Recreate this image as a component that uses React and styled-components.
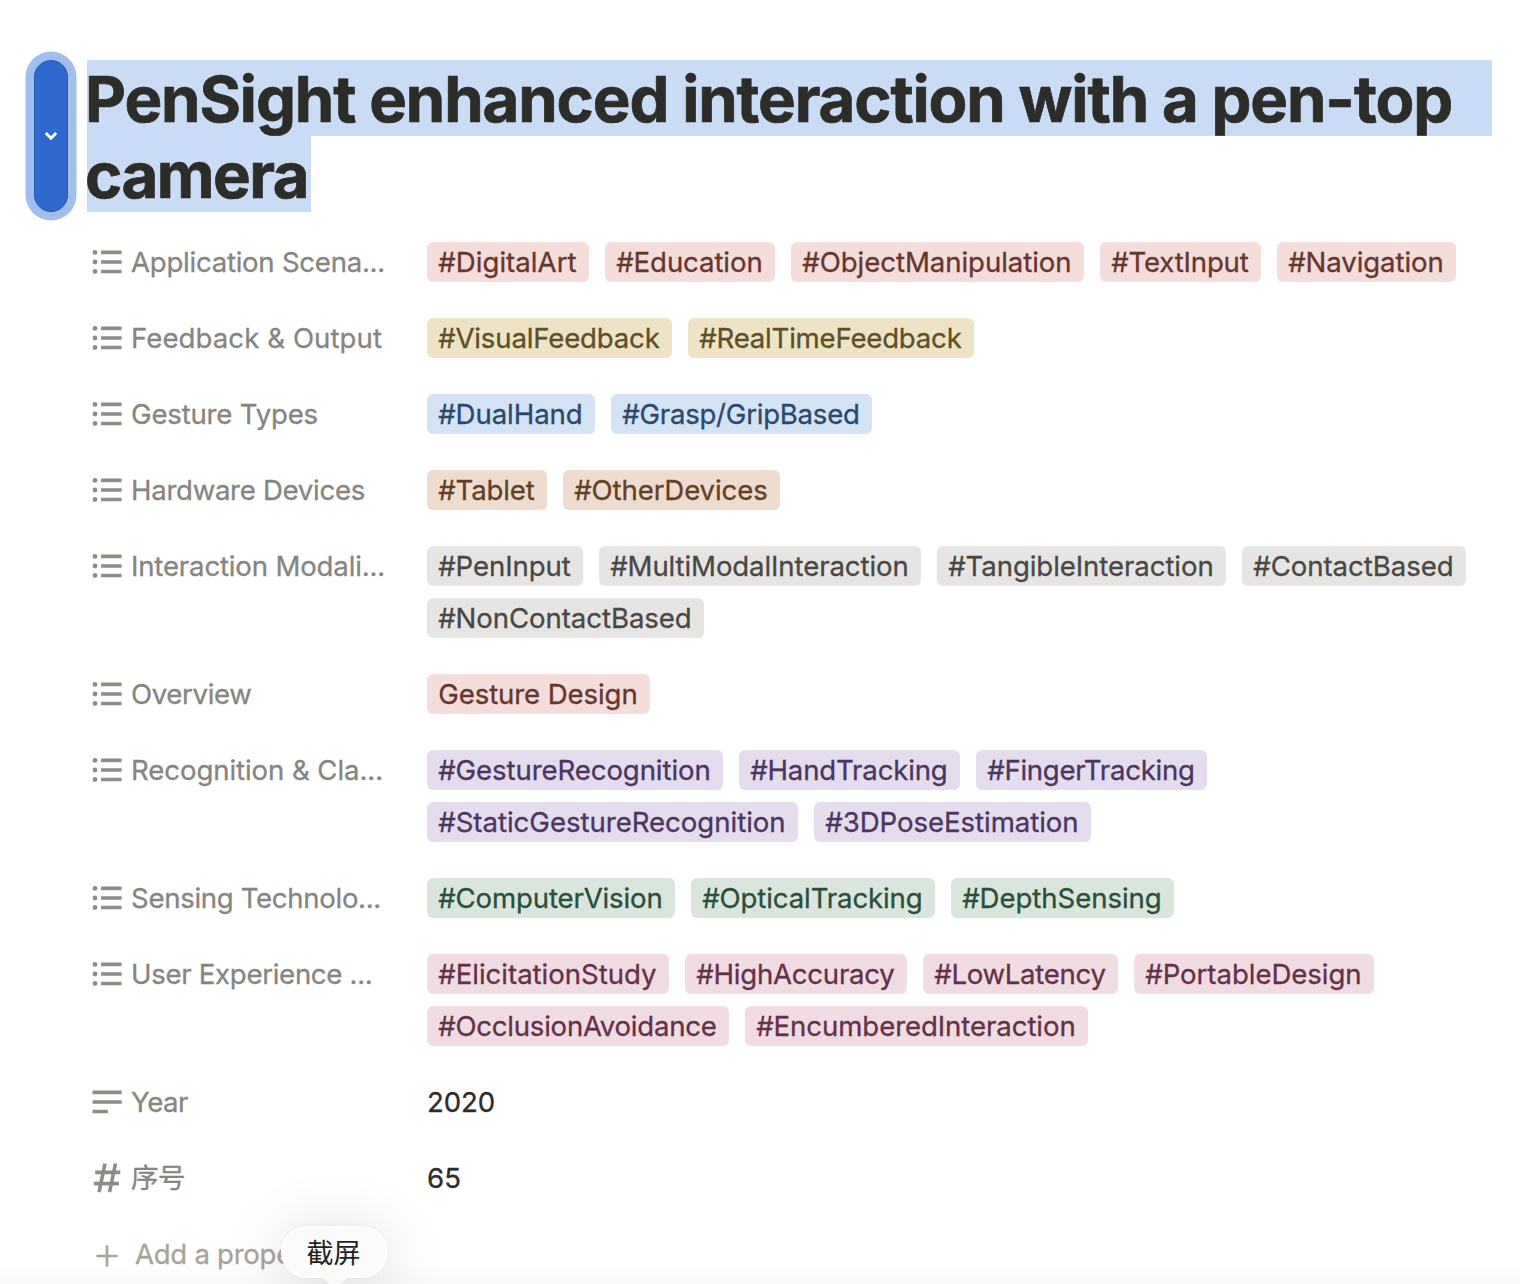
import React, { useLayoutEffect, useRef, useState } from "react";
import styled, { createGlobalStyle } from "styled-components";

const GlobalStyle = createGlobalStyle`
  * { box-sizing: border-box; }
  body {
    margin: 0;
    background: #fff;
    font-family: Inter, "Noto Sans CJK SC", sans-serif;
    font-size: 27.6px;
    font-weight: 400;
    line-height: 40px;
    color: #2c2c2b;
    overflow: hidden;
    -webkit-text-stroke: 0.3px currentColor;
  }
`;

const Page = styled.main`
  position: relative;
  width: 1520px;
  height: 1284px;
  padding: 60px 28px 0 34px;
  overflow: hidden;
  background: linear-gradient(#fff 1258px, #fafafa 1284px);
`;

const Header = styled.header`
  display: flex;
  gap: 19px;
  height: 152px;
`;

const Handle = styled.button`
  display: flex;
  align-items: center;
  justify-content: center;
  width: 34px;
  height: 152px;
  padding: 0;
  border: 1px solid #2756ab;
  border-radius: 17px;
  background: #3069cd;
  box-shadow: 0 0 0 8.5px #a1bfee;
`;

const Title = styled.h1`
  flex: 1;
  margin: 0;
  font-size: 63.4px;
  line-height: 78px;
  font-weight: 700;
  -webkit-text-stroke: 0.7px currentColor;
`;

const TitleLine = styled.span`
  display: block;
  width: ${(p) => p.$width}px;
  height: 76px;
  background: #cadbf5;
  text-indent: -1px;
`;

const List = styled.section`
  display: flex;
  flex-direction: column;
  gap: 36px;
  padding: 30px 0 0 58px;
`;

const Row = styled.div`
  display: flex;
`;

const Label = styled.div`
  display: flex;
  gap: 9px;
  width: 335px;
  height: 40px;
  color: #868580;
  svg { flex: none; width: 30px; height: 40px; }
`;

const Values = styled.div`
  display: flex;
  flex: 1;
  flex-wrap: wrap;
  gap: 12px 16px;
`;

const PlainValue = styled.div`
  height: 40px;
`;

const TONES = {
  red: ["#f4dddb", "#68352e"],
  yellow: ["#eee3c5", "#5f4f27"],
  blue: ["#d5e3f6", "#2b486d"],
  orange: ["#f0dccf", "#633f26"],
  gray: ["#e6e5e3", "#494846"],
  purple: ["#e5dcee", "#4b3563"],
  green: ["#dae6dd", "#2a4f3a"],
  pink: ["#f2dce3", "#653148"],
};

const Tag = styled.span`
  height: 40px;
  padding: 0 12px;
  border-radius: 6px;
  text-indent: -0.4px;
  background: ${(p) => TONES[p.$tone][0]};
  color: ${(p) => TONES[p.$tone][1]};
`;

const Text = styled.span`
  display: block;
  white-space: nowrap;
  width: ${(p) => p.$width}px;
`;

const Measure = styled.span`
  display: inline-block;
`;

const AddRow = styled.div`
  display: flex;
  gap: 13px;
  height: 40px;
  color: #a7a49c;
  svg { flex: none; width: 30px; height: 40px; }
`;

const Bubble = styled.div`
  position: absolute;
  left: 281px;
  top: 1226px;
  width: 107px;
  height: 52px;
  border: 2px solid #fff;
  border-radius: 26px;
  background: #fbfbfb;
  color: #1f1f1f;
  font-size: 27px;
  text-align: center;
  text-indent: -2px;
  line-height: 51px;
  -webkit-text-stroke: 0;
  box-shadow: 0 8px 64px rgba(0, 0, 0, 0.16), 0 0 3px rgba(0, 0, 0, 0.06);
`;

const BubbleTail = styled.svg`
  position: absolute;
  left: 34px;
  top: 48px;
  width: 36px;
  height: 14px;
`;

/* Tracks the letters so that the string fills the given width. */
function Fit({ width, children }) {
  const ref = useRef(null);
  const [spacing, setSpacing] = useState(0);
  useLayoutEffect(() => {
    const natural = ref.current.getBoundingClientRect().width;
    setSpacing((width - natural) / children.length);
  }, [width, children]);
  return (
    <Text $width={width}>
      <Measure ref={ref} style={{ letterSpacing: `${spacing}px` }}>{children}</Measure>
    </Text>
  );
}

const ListIcon = () => (
  <svg viewBox="0 0 30 40" fill="#8e8d86">
    <circle cx="3" cy="10.4" r="2.4" /><circle cx="3" cy="20" r="2.4" /><circle cx="3" cy="29.5" r="2.4" />
    <rect x="9" y="8.6" width="20.6" height="3.6" rx=".4" />
    <rect x="9" y="18.2" width="20.6" height="3.6" rx=".4" />
    <rect x="9" y="27.7" width="20.6" height="3.6" rx=".4" />
  </svg>
);

const TextIcon = () => (
  <svg viewBox="0 0 30 40" fill="#8e8d86">
    <rect x=".5" y="8.6" width="29.2" height="3.6" rx=".4" />
    <rect x=".5" y="18.2" width="29.2" height="3.6" rx=".4" />
    <rect x=".5" y="27.7" width="15.4" height="3.6" rx=".4" />
  </svg>
);

const HashIcon = () => (
  <svg viewBox="0 0 30 40" fill="none" stroke="#8e8d86" strokeWidth="3.6">
    <path d="M3.2 14.4H28.3M1.8 25.6H26.9M13 5.6L7 34.2M23.5 5.6L17.5 34.2" />
  </svg>
);

const ICONS = { list: ListIcon, text: TextIcon, hash: HashIcon };

const ROWS = [
  { label: "Application Scena...", w: 254, tone: "red", tags: [["#DigitalArt", 162], ["#Education", 170], ["#ObjectManipulation", 293], ["#TextInput", 161], ["#Navigation", 179]] },
  { label: "Feedback & Output", w: 251, tone: "yellow", tags: [["#VisualFeedback", 245], ["#RealTimeFeedback", 286]] },
  { label: "Gesture Types", w: 187, tone: "blue", tags: [["#DualHand", 168], ["#Grasp/GripBased", 261]] },
  { label: "Hardware Devices", w: 234, tone: "orange", tags: [["#Tablet", 120], ["#OtherDevices", 217]] },
  { label: "Interaction Modali...", w: 254, tone: "gray", tags: [["#PenInput", 156], ["#MultiModalInteraction", 322], ["#TangibleInteraction", 289], ["#ContactBased", 224], ["#NonContactBased", 277]] },
  { label: "Overview", w: 120.5, tone: "red", tags: [["Gesture Design", 223]] },
  { label: "Recognition & Cla...", w: 252, tone: "purple", tags: [["#GestureRecognition", 296], ["#HandTracking", 221], ["#FingerTracking", 231], ["#StaticGestureRecognition", 371], ["#3DPoseEstimation", 277]] },
  { label: "Sensing Technolo...", w: 250, tone: "green", tags: [["#ComputerVision", 248], ["#OpticalTracking", 244], ["#DepthSensing", 223]] },
  { label: "User Experience ...", w: 241.5, tone: "pink", tags: [["#ElicitationStudy", 242], ["#HighAccuracy", 222], ["#LowLatency", 195], ["#PortableDesign", 240], ["#OcclusionAvoidance", 302], ["#EncumberedInteraction", 343]] },
  { label: "Year", w: 57, icon: "text", value: ["2020", 68] },
  { label: "序号", w: 54, icon: "hash", value: ["65", 34] },
];

function Property({ label, w, icon = "list", tone, tags, value }) {
  const Icon = ICONS[icon];
  return (
    <Row>
      <Label><Icon /><Fit width={w}>{label}</Fit></Label>
      <Values>
        {tags && tags.map(([name, width]) => (
          <Tag key={name} $tone={tone}><Fit width={width - 24}>{name}</Fit></Tag>
        ))}
        {value && <PlainValue><Fit width={value[1]}>{value[0]}</Fit></PlainValue>}
      </Values>
    </Row>
  );
}

export default function App() {
  return (
    <>
      <GlobalStyle />
      <Page>
        <Header>
          <Handle aria-label="Toggle">
            <svg width="14" height="10" viewBox="0 0 14 10" fill="none" stroke="#fff" strokeWidth="3">
              <path d="M1.8 2L7 7.2L12.2 2" />
            </svg>
          </Handle>
          <Title>
            <TitleLine $width={1405}><Fit width={1366}>PenSight enhanced interaction with a pen-top</Fit></TitleLine>
            <TitleLine $width={224}><Fit width={222}>camera</Fit></TitleLine>
          </Title>
        </Header>
        <List>
          {ROWS.map((r) => <Property key={r.label} {...r} />)}
          <AddRow>
            <svg viewBox="0 0 30 40" fill="none" stroke="#a7a49c" strokeWidth="2.6" strokeLinecap="round">
              <path d="M15 12.5V31.5M5.5 22H24.5" />
            </svg>
            <Fit width={157}>Add a prope</Fit>
          </AddRow>
        </List>
        <Bubble>
          截屏
          <BubbleTail viewBox="0 0 36 14"><path d="M0 0C8 1 10 8 18 12C26 8 28 1 36 0Z" fill="#fbfbfb" /></BubbleTail>
        </Bubble>
      </Page>
    </>
  );
}
